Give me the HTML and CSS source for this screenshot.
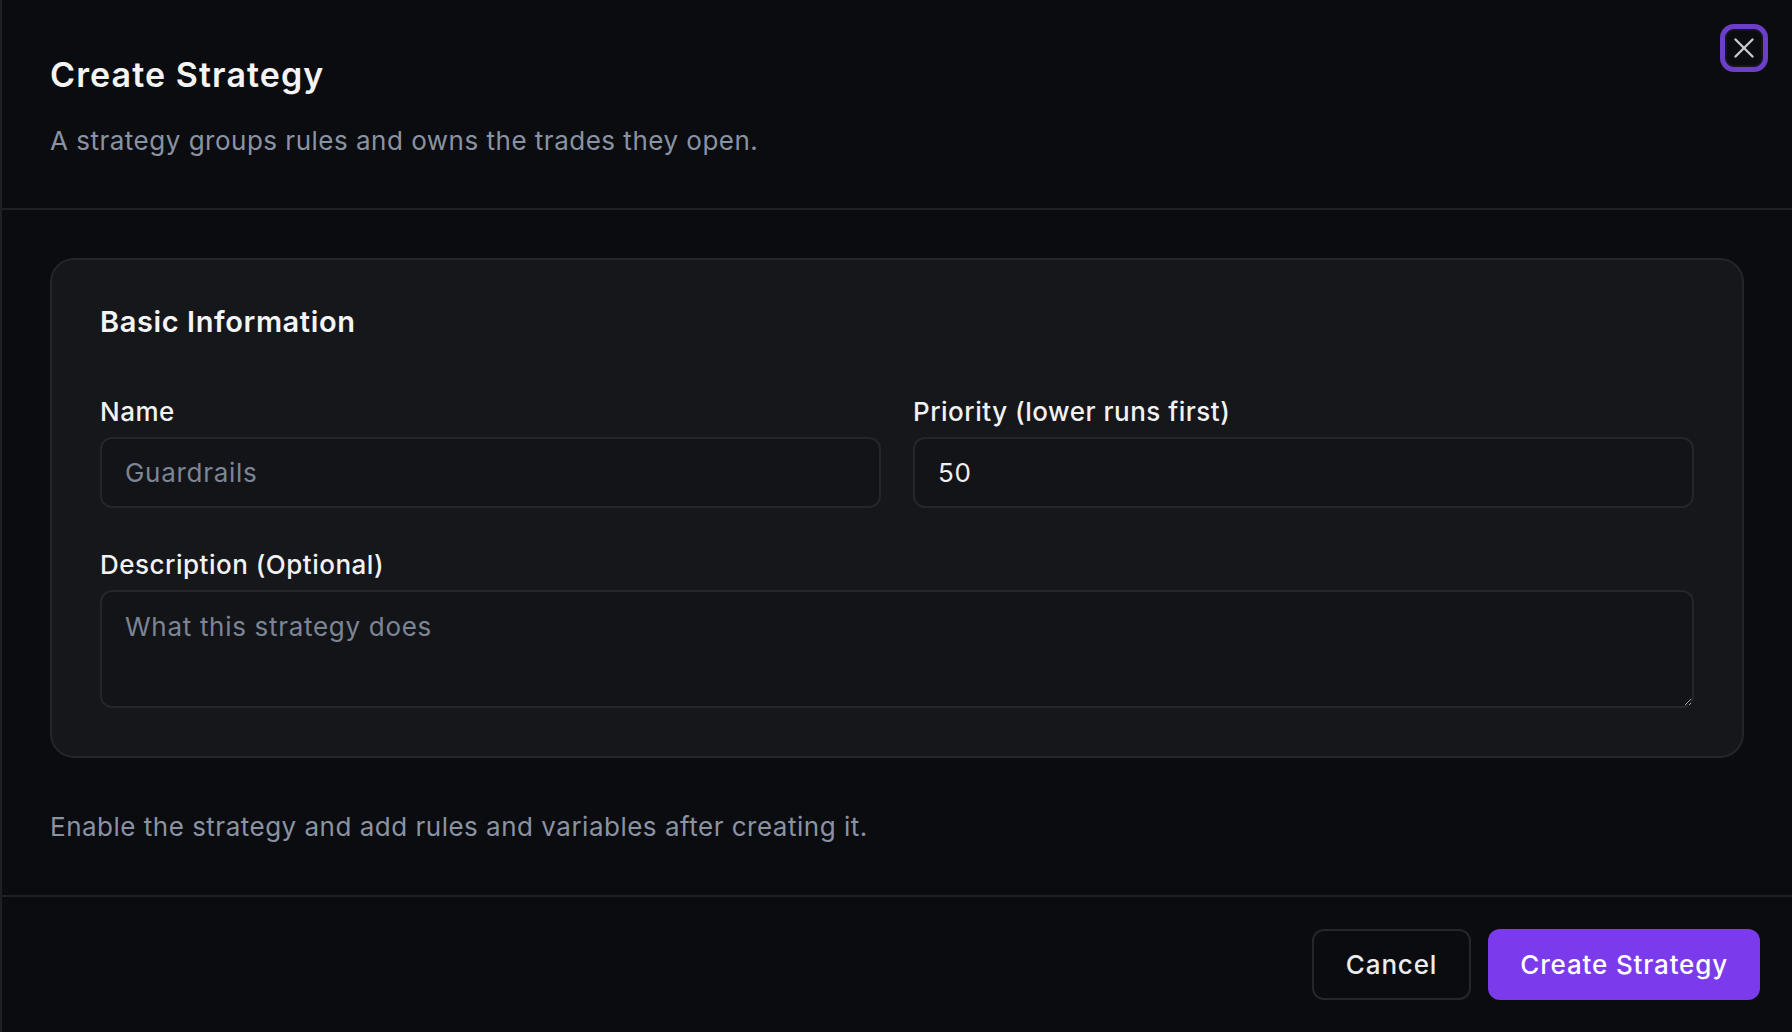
FILE: index.html
```html
<!DOCTYPE html>
<html lang="en">
<head>
  <meta charset="UTF-8" />
  <meta name="viewport" content="width=device-width, initial-scale=1.0"/>
  <title>Create Strategy</title>
  <link rel="stylesheet" href="styles.css">
</head>
<body>
  <div class="dialog">
    <button class="close" aria-label="Close">
      <svg width="20" height="20" viewBox="0 0 20 20" fill="none" stroke="currentColor" stroke-width="2.4" stroke-linecap="round">
        <path d="M1.5 1.5 18.5 18.5"/>
        <path d="M18.5 1.5 1.5 18.5"/>
      </svg>
    </button>

    <div class="header">
      <h1>Create Strategy</h1>
      <p class="muted">A strategy groups rules and owns the trades they open.</p>
    </div>

    <div class="content">
      <div class="card">
        <h3>Basic Information</h3>
        <div class="row">
          <div class="field">
            <label for="name">Name</label>
            <input type="text" id="name" placeholder="Guardrails" />
          </div>
          <div class="field">
            <label for="priority">Priority (lower runs first)</label>
            <input type="text" id="priority" value="50" />
          </div>
        </div>
        <div class="field">
          <label for="desc">Description (Optional)</label>
          <textarea id="desc" placeholder="What this strategy does"></textarea>
        </div>
      </div>
      <p class="muted note">Enable the strategy and add rules and variables after creating it.</p>
    </div>

    <div class="footer">
      <button class="btn btn-outline">Cancel</button>
      <button class="btn btn-primary">Create Strategy</button>
    </div>
  </div>
</body>
</html>
```

FILE: styles.css
```css
:root {
  color-scheme: dark;
}
body {
  font-family: 'Inter', 'Liberation Sans', sans-serif;
  background-color: #0b0c0f;
  margin: 0;
  padding: 0;
  color: #f4f4f5;
}
.dialog {
  position: relative;
  height: 100vh;
  border-left: 2px solid #1f2026;
  display: flex;
  flex-direction: column;
  box-sizing: border-box;
}
.close {
  position: absolute;
  top: 24px;
  right: 24px;
  width: 48px;
  height: 48px;
  box-sizing: border-box;
  border: 5px solid #6c3fc8;
  border-radius: 14px;
  background: #0b0c0f;
  color: #c8c8cc;
  display: flex;
  align-items: center;
  justify-content: center;
  padding: 0;
  box-shadow: inset 0 0 0 2px #17151f;
  cursor: pointer;
}
.header {
  padding: 55px 48px 48px;
  border-bottom: 2px solid #1f2026;
}
h1 {
  font-size: 34px;
  font-weight: 600;
  line-height: 40px;
  margin: 0 0 27px;
  letter-spacing: 1.1px;
}
.muted {
  color: #8a93a3;
  font-size: 26px;
  line-height: 37.5px;
  margin: 0;
  letter-spacing: 0.5px;
}
.content {
  padding: 48px;
  flex: 1;
}
.card {
  background: #16171b;
  border: 2px solid #24252b;
  border-radius: 24px;
  padding: 48px;
}
h3 {
  font-size: 29px;
  font-weight: 600;
  line-height: 28px;
  margin: 0 0 58px;
  letter-spacing: 0.6px;
}
.row {
  display: grid;
  grid-template-columns: 1fr 1fr;
  gap: 32px;
  margin-bottom: 39px;
}
.field {
  display: flex;
  flex-direction: column;
  gap: 7px;
}
label {
  font-size: 26px;
  font-weight: 500;
  line-height: 36px;
  color: #f2f2f3;
  letter-spacing: 0.5px;
}
input, textarea {
  font-family: inherit;
  font-size: 26px;
  color: #f0f0f1;
  background: #131418;
  border: 2px solid #25262c;
  border-radius: 12px;
  padding: 0 23px;
  box-sizing: border-box;
  outline: none;
  letter-spacing: 0.7px;
}
input {
  height: 71px;
}
textarea {
  height: 118px;
  padding-top: 16px;
  line-height: 37.5px;
}
input::placeholder, textarea::placeholder {
  color: #7c8595;
}
.note {
  margin-top: 49px;
  line-height: 40px;
}
.footer {
  border-top: 2px solid #1f2026;
  padding: 32px;
  display: flex;
  justify-content: flex-end;
  gap: 17px;
}
.btn {
  font-family: inherit;
  font-size: 26px;
  font-weight: 500;
  height: 71px;
  padding: 0 32px;
  border-radius: 12px;
  cursor: pointer;
  letter-spacing: 0.85px;
}
.btn-outline {
  background: #0b0c0f;
  color: #ececee;
  border: 2px solid #25262c;
}
.btn-primary {
  background: #7c3aed;
  color: #fff;
  border: none;
}
```
